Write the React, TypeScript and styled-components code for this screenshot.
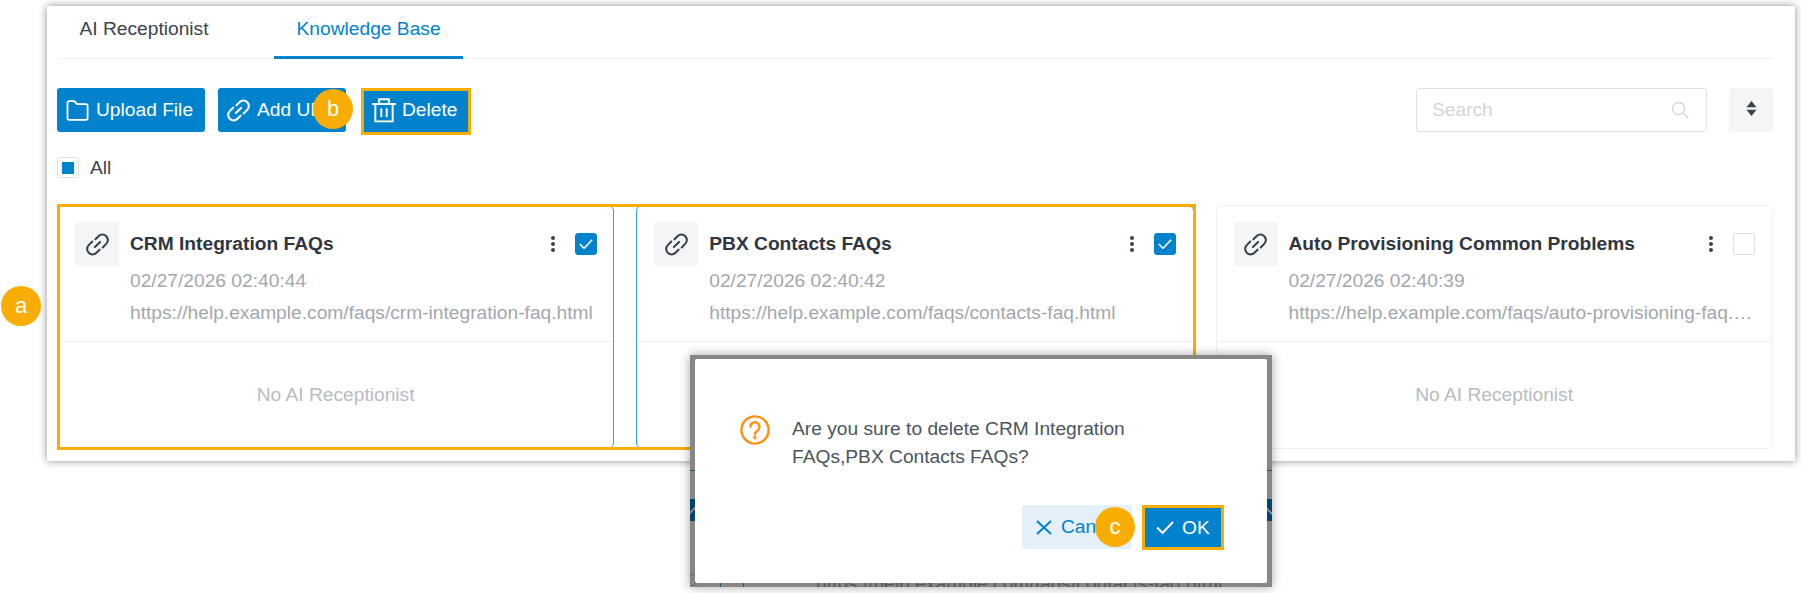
import React from 'react';
import styled, { createGlobalStyle } from 'styled-components';

const BLUE = '#0082cc';
const ORANGE = '#f8ad05';
const INK = '#3a424e';

const GlobalStyle = createGlobalStyle`
  html, body {
    margin: 0;
    padding: 0;
    background: #fff;
  }
  * {
    box-sizing: border-box;
  }
`;

type CardData = {
  title: string;
  date: string;
  url: string;
  checked: boolean;
};

const cards: CardData[] = [
  {
    title: 'CRM Integration FAQs',
    date: '02/27/2026 02:40:44',
    url: 'https://help.example.com/faqs/crm-integration-faq.html',
    checked: true,
  },
  {
    title: 'PBX Contacts FAQs',
    date: '02/27/2026 02:40:42',
    url: 'https://help.example.com/faqs/contacts-faq.html',
    checked: true,
  },
  {
    title: 'Auto Provisioning Common Problems',
    date: '02/27/2026 02:40:39',
    url: 'https://help.example.com/faqs/auto-provisioning-faq.html',
    checked: false,
  },
];

const LinkIcon = ({ size = 25 }: { size?: number }) => (
  <svg width={size} height={size} viewBox="0 0 24 24" fill="none" stroke="currentColor" strokeWidth="2" strokeLinecap="round">
    <path d="M10 7 L13 4 A5.2 5.2 0 0 1 20.4 11.4 L17 14.8" />
    <path d="M7 9.2 L3.6 12.6 A5.2 5.2 0 0 0 11 20 L14 17" />
    <path d="M9.5 14.5 L14.5 9.5" />
  </svg>
);

const FolderIcon = () => (
  <svg width="23" height="21" viewBox="0 0 23 21" fill="none" stroke="currentColor" strokeWidth="1.8" strokeLinejoin="round">
    <path d="M1.5 3 Q1.5 1.2 3.2 1.2 H8.4 L11 4.2 H20 Q21.6 4.2 21.6 6 V18 Q21.6 19.8 20 19.8 H3.2 Q1.5 19.8 1.5 18 Z" />
  </svg>
);

const TrashIcon = () => (
  <svg width="26" height="26" viewBox="0 0 24 24" fill="none" stroke="currentColor" strokeWidth="1.8">
    <path d="M1 6.5 H23" />
    <path d="M7.5 6.5 V2 H16.5 V6.5" />
    <path d="M4 6.5 V22.5 H20 V6.5" />
    <path d="M9.5 10.5 V18.5" />
    <path d="M14.5 10.5 V18.5" />
  </svg>
);

const SearchIcon = () => (
  <svg width="18" height="18" viewBox="0 0 18 18" fill="none" stroke="#d3d6da" strokeWidth="1.4" strokeLinecap="round">
    <circle cx="7.5" cy="7.5" r="6" />
    <path d="M12 12 L17 17" />
  </svg>
);

const SortIcon = () => (
  <svg width="11" height="15" viewBox="0 0 11 15" fill={INK}>
    <path d="M5.5 0 L10.5 6.2 H0.5 Z" />
    <path d="M5.5 15 L10.5 8.8 H0.5 Z" />
  </svg>
);

const DotsIcon = () => (
  <svg width="6" height="18" viewBox="0 0 6 18" fill={INK}>
    <circle cx="3" cy="3" r="2" />
    <circle cx="3" cy="9" r="2" />
    <circle cx="3" cy="15" r="2" />
  </svg>
);

const TickIcon = ({ size = 14 }: { size?: number }) => (
  <svg width={size} height={size * 0.72} viewBox="0 0 18 13" fill="none" stroke="currentColor" strokeWidth="2">
    <path d="M1 6.5 L6.5 12 L17 1" />
  </svg>
);

const CrossIcon = () => (
  <svg width="16" height="15" viewBox="0 0 16 15" fill="none" stroke="currentColor" strokeWidth="2">
    <path d="M1 1 L15 14" />
    <path d="M15 1 L1 14" />
  </svg>
);

const QuestionIcon = () => (
  <svg width="30" height="30" viewBox="0 0 30 30" fill="none" stroke="#ff8f0f" strokeWidth="2.4" strokeLinecap="round">
    <circle cx="15" cy="15" r="13.6" />
    <path d="M10.4 11.8 a4.6 4.6 0 1 1 7.2 3.8 c-1.6 1.1 -2.6 1.9 -2.6 3.6" />
    <circle cx="15" cy="22.6" r="0.6" fill="#ff8f0f" />
  </svg>
);

export default function App() {
  return (
    <Page>
      <GlobalStyle />
      <Panel>
        <Tabs>
          <Tab>AI Receptionist</Tab>
          <Tab $active>Knowledge Base</Tab>
        </Tabs>

        <Toolbar>
          <Actions>
            <ActionButton $wide={148} $pad={9} $gap={7}>
              <FolderIcon />
              Upload File
            </ActionButton>
            <ActionButton $wide={128} $pad={8} $gap={6}>
              <LinkIcon />
              Add URL
            </ActionButton>
            <ActionButton $wide={110} $pad={7} $gap={5} $marked>
              <TrashIcon />
              Delete
            </ActionButton>
          </Actions>
          <SearchBox>
            <SearchPlaceholder>Search</SearchPlaceholder>
            <SearchIcon />
          </SearchBox>
          <SortButton>
            <SortIcon />
          </SortButton>
        </Toolbar>

        <SelectAll>
          <MixedBox />
          All
        </SelectAll>

        <CardGrid>
          {cards.map((card) => (
            <Card key={card.title} $selected={card.checked}>
              <CardBody>
                <CardIcon>
                  <LinkIcon />
                </CardIcon>
                <CardText>
                  <CardHead>
                    <CardTitle>{card.title}</CardTitle>
                    <DotsSlot>
                      <DotsIcon />
                    </DotsSlot>
                    <CheckBox $checked={card.checked}>{card.checked && <TickIcon />}</CheckBox>
                  </CardHead>
                  <CardDate>{card.date}</CardDate>
                  <CardUrl>{card.url}</CardUrl>
                </CardText>
              </CardBody>
              <CardFoot>No AI Receptionist</CardFoot>
            </Card>
          ))}
          <SelectionFrame />
        </CardGrid>
      </Panel>

      <ModalLayer>
        <BackLine />
        <BackBand>
          <BackChevron $side="left" />
          <BackChevron $side="right" />
        </BackBand>
        <BackRule $x={30} />
        <BackRule $x={53} />
        <BackCorner />
        <BackUrl>https://help.example.com/faqs/contacts-faq.html</BackUrl>
        <Scrim />
        <Dialog>
          <DialogMessage>
            <QuestionIcon />
            <DialogText>Are you sure to delete CRM Integration FAQs,PBX Contacts FAQs?</DialogText>
          </DialogMessage>
          <DialogActions>
            <CancelButton>
              <CrossIcon />
              Cancel
            </CancelButton>
            <OkButton>
              <TickIcon size={18} />
              OK
            </OkButton>
          </DialogActions>
        </Dialog>
      </ModalLayer>

      <Badge $x={1} $y={286}>a</Badge>
      <Badge $x={313} $y={89}>b</Badge>
      <Badge $x={1095} $y={507}>c</Badge>
    </Page>
  );
}

const Page = styled.div`
  position: relative;
  width: 1801px;
  height: 593px;
  overflow: hidden;
  padding: 6px 0 0 47px;
  background: #fff;
  font-family: 'Liberation Sans', Arial, sans-serif;
  font-size: 19.2px;
  color: ${INK};
`;

const Panel = styled.div`
  width: 1748px;
  height: 455px;
  padding: 0 22px 0 10px;
  background: #fff;
  box-shadow: 0 0 8px rgba(0, 0, 0, 0.45);
`;

const Tabs = styled.div`
  display: flex;
  gap: 43px;
  height: 53px;
  border-bottom: 1px solid #eef0f2;
`;

const Tab = styled.div<{ $active?: boolean }>`
  height: 53px;
  padding: 11px 22.5px 0;
  line-height: 24px;
  white-space: nowrap;
  color: ${(p) => (p.$active ? BLUE : INK)};
  border-bottom: 3px solid ${(p) => (p.$active ? BLUE : 'transparent')};
`;

const Toolbar = styled.div`
  display: flex;
  align-items: flex-start;
  margin-top: 29px;
  height: 47px;
`;

const Actions = styled.div`
  display: flex;
  align-items: flex-start;
  gap: 13px;
  margin-right: auto;
`;

const ActionButton = styled.div<{ $wide: number; $pad: number; $gap: number; $marked?: boolean }>`
  display: flex;
  align-items: center;
  gap: ${(p) => p.$gap}px;
  width: ${(p) => p.$wide}px;
  height: ${(p) => (p.$marked ? 47 : 44)}px;
  margin-left: ${(p) => (p.$marked ? 2 : 0)}px;
  padding: 0 0 ${(p) => (p.$marked ? 3 : 0)}px ${(p) => p.$pad}px;
  background: ${BLUE};
  color: #fff;
  border-radius: ${(p) => (p.$marked ? 0 : 3)}px;
  border: ${(p) => (p.$marked ? `3px solid ${ORANGE}` : 'none')};
  white-space: nowrap;
`;

const SearchBox = styled.div`
  display: flex;
  align-items: center;
  justify-content: space-between;
  width: 291px;
  height: 44px;
  padding: 0 17px 0 15px;
  border: 1px solid #dfe1e5;
  border-radius: 3px;
`;

const SearchPlaceholder = styled.span`
  color: #d2d5d9;
`;

const SortButton = styled.div`
  display: flex;
  align-items: center;
  justify-content: center;
  width: 44px;
  height: 44px;
  margin-left: 22px;
  background: #f4f5f7;
  border-radius: 2px;
  padding-bottom: 4px;
`;

const SelectAll = styled.div`
  display: flex;
  align-items: center;
  gap: 11px;
  height: 21px;
  margin-top: 22px;
`;

const MixedBox = styled.div`
  display: flex;
  align-items: center;
  justify-content: center;
  width: 22px;
  height: 21px;
  border: 1px solid #dfe1e5;
  border-radius: 3px;

  &::after {
    content: '';
    width: 12px;
    height: 12px;
    background: ${BLUE};
  }
`;

const CardGrid = styled.div`
  position: relative;
  display: grid;
  grid-template-columns: repeat(3, 557.25px);
  column-gap: 22px;
  margin-top: 27px;
`;

const Card = styled.div<{ $selected: boolean }>`
  height: 244px;
  background: #fff;
  border: 1px solid ${(p) => (p.$selected ? '#37a3e4' : '#eef0f2')};
  border-radius: 6px;
  display: flex;
  flex-direction: column;
`;

const CardBody = styled.div`
  display: flex;
  gap: 11px;
  height: 136px;
  padding: 16px 16.5px 0 17px;
  border-bottom: 1px solid #eef0f2;
`;

const CardIcon = styled.div`
  flex: none;
  display: flex;
  align-items: center;
  justify-content: center;
  width: 44px;
  height: 44px;
  background: #f4f5f7;
  border-radius: 3px;
  color: ${INK};
`;

const CardText = styled.div`
  flex: 1;
  min-width: 0;
`;

const CardHead = styled.div`
  display: flex;
  align-items: center;
  height: 44px;
`;

const CardTitle = styled.div`
  flex: 1;
  font-weight: 700;
  color: #2f3641;
  white-space: nowrap;
`;

const DotsSlot = styled.div`
  display: flex;
  width: 6px;
  margin-right: 19px;
`;

const CheckBox = styled.div<{ $checked: boolean }>`
  display: flex;
  align-items: center;
  justify-content: center;
  width: 22px;
  height: 22px;
  border-radius: 3px;
  color: #fff;
  background: ${(p) => (p.$checked ? BLUE : '#fff')};
  border: 1px solid ${(p) => (p.$checked ? BLUE : '#dfe1e5')};
`;

const CardDate = styled.div`
  margin-top: -1px;
  line-height: 32px;
  color: #a3a7ae;
`;

const CardUrl = styled.div`
  line-height: 32px;
  color: #a3a7ae;
  white-space: nowrap;
  overflow: hidden;
  text-overflow: ellipsis;
`;

const CardFoot = styled.div`
  flex: 1;
  display: flex;
  align-items: center;
  justify-content: center;
  color: #b8bbc1;
`;

/* annotation drawn over the first two selected cards */
const SelectionFrame = styled.div`
  position: absolute;
  left: 0;
  top: -1px;
  width: 1139px;
  height: 246px;
  border: 3.5px solid ${ORANGE};
  pointer-events: none;
`;

const ModalLayer = styled.div`
  position: absolute;
  left: 690px;
  top: 355px;
  width: 582px;
  height: 232px;
  padding: 4px 5px;
  background: #fff;
  overflow: hidden;
  box-shadow: 0 0 10px rgba(0, 0, 0, 0.35);
`;

const BackLine = styled.div`
  position: absolute;
  left: 0;
  right: 0;
  top: 115px;
  height: 1px;
  background: #37a3e4;
`;

const BackBand = styled.div`
  position: absolute;
  left: 0;
  right: 0;
  top: 144px;
  height: 22px;
  background: ${BLUE};
`;

const BackChevron = styled.div<{ $side: 'left' | 'right' }>`
  position: absolute;
  top: 5px;
  ${(p) => (p.$side === 'left' ? 'left: -5px;' : 'right: -4px;')}
  width: 9px;
  height: 9px;
  border-right: 2px solid #fff;
  border-bottom: 2px solid #fff;
  transform: rotate(45deg);
`;

const BackRule = styled.div<{ $x: number }>`
  position: absolute;
  left: ${(p) => p.$x}px;
  top: 210px;
  width: 1px;
  height: 22px;
  background: #37a3e4;
`;

const BackCorner = styled.div`
  position: absolute;
  left: -4px;
  top: 219px;
  width: 10px;
  height: 12px;
  border: 1px solid #c8ccd2;
  border-radius: 4px;
`;

const BackUrl = styled.div`
  position: absolute;
  left: 126px;
  top: 215px;
  line-height: 28px;
  color: #a3a7ae;
  white-space: nowrap;
`;

const Scrim = styled.div`
  position: absolute;
  inset: 0;
  background: rgba(0, 0, 0, 0.47);
`;

const Dialog = styled.div`
  position: relative;
  height: 224px;
  padding: 56px 43px 0 45px;
  background: #fff;
  border-radius: 2px;
`;

const DialogMessage = styled.div`
  display: flex;
  gap: 22px;
`;

const DialogText = styled.div`
  width: 400px;
  line-height: 28px;
  color: #4a5460;
`;

const DialogActions = styled.div`
  display: flex;
  justify-content: flex-end;
  align-items: flex-start;
  gap: 10px;
  margin-top: 34px;
`;

const CancelButton = styled.div`
  display: flex;
  align-items: center;
  gap: 9px;
  width: 110px;
  height: 44px;
  padding-left: 14px;
  background: #e4f1fa;
  color: ${BLUE};
  border-radius: 3px;
`;

const OkButton = styled.div`
  display: flex;
  align-items: center;
  gap: 8px;
  width: 82px;
  height: 45px;
  padding-left: 11px;
  background: ${BLUE};
  color: #fff;
  border: 3px solid ${ORANGE};
`;

const Badge = styled.div<{ $x: number; $y: number }>`
  position: absolute;
  left: ${(p) => p.$x}px;
  top: ${(p) => p.$y}px;
  display: flex;
  align-items: center;
  justify-content: center;
  width: 40px;
  height: 40px;
  border-radius: 50%;
  background: ${ORANGE};
  color: #fff;
  font-size: 22px;
`;
